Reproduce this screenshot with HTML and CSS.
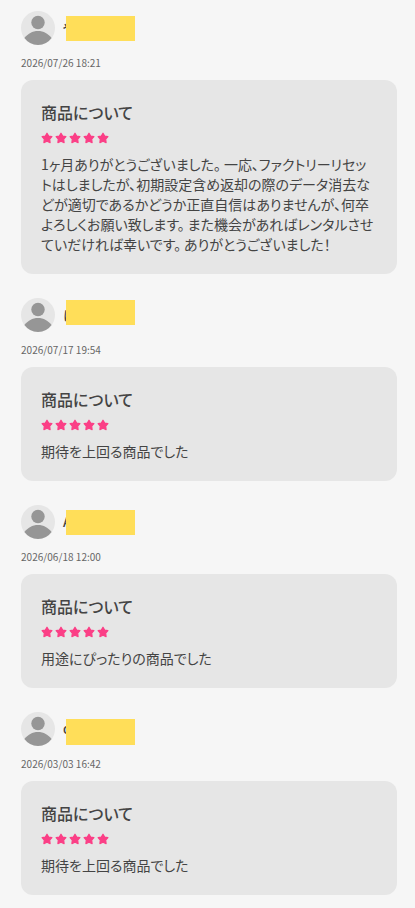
FILE: index.html
```html
<!DOCTYPE html>
<html lang="ja">
<head>
<meta charset="utf-8">
<meta name="viewport" content="width=device-width, initial-scale=1">
<title>レビュー</title>
<link rel="stylesheet" href="styles.css">
</head>
<body>
<svg class="defs" width="0" height="0" aria-hidden="true">
  <symbol id="avatar" viewBox="0 0 34 34">
    <circle cx="17" cy="17" r="17" fill="#e6e6e6"/>
    <circle cx="17" cy="11.5" r="6.7" fill="#969696"/>
    <path d="M3.4 27.1C6.6 22.7 11.5 20 17 20s10.4 2.7 13.6 7.1A17 17 0 0 1 17 34 17 17 0 0 1 3.4 27.1Z" fill="#969696"/>
  </symbol>
  <symbol id="stars" viewBox="0 0 68 12">
    <g fill="#fb3f86" stroke="#fb3f86" stroke-width="1.2" stroke-linejoin="round">
      <path id="star" d="M6 1.2l1.7 2.9 3.2.6-2.2 2.5.4 3.4L6 9.3l-3.1 1.3.4-3.4L1.1 4.7l3.2-.6z"/>
      <use href="#star" x="14"/>
      <use href="#star" x="28"/>
      <use href="#star" x="42"/>
      <use href="#star" x="56"/>
    </g>
  </symbol>
</svg>
<main class="reviews">
  <article class="review">
    <header class="user"><svg class="avatar"><use href="#avatar"/></svg><span class="name">や<i class="mask mask-a"></i></span></header>
    <time class="date">2026/07/26 18:21</time>
    <section class="card">
      <h2 class="title">商品について</h2>
      <svg class="stars"><use href="#stars"/></svg>
      <p class="text">1ヶ月ありがとうございました<span class="stop">。</span>一応、ファクトリーリセッ<br>トはしましたが、初期設定含め返却の際のデータ消去な<br>どが適切であるかどうか正直自信はありませんが、何卒<br>よろしくお願い致します<span class="stop">。</span>また機会があればレンタルさせ<br>ていだければ幸いです<span class="stop">。</span>ありがとうございました！</p>
    </section>
  </article>
  <article class="review">
    <header class="user"><svg class="avatar"><use href="#avatar"/></svg><span class="name">ほ<i class="mask mask-b"></i></span></header>
    <time class="date">2026/07/17 19:54</time>
    <section class="card">
      <h2 class="title">商品について</h2>
      <svg class="stars"><use href="#stars"/></svg>
      <p class="text">期待を上回る商品でした</p>
    </section>
  </article>
  <article class="review">
    <header class="user"><svg class="avatar"><use href="#avatar"/></svg><span class="name">A<i class="mask mask-a"></i></span></header>
    <time class="date">2026/06/18 12:00</time>
    <section class="card">
      <h2 class="title">商品について</h2>
      <svg class="stars"><use href="#stars"/></svg>
      <p class="text">用途にぴったりの商品でした</p>
    </section>
  </article>
  <article class="review">
    <header class="user"><svg class="avatar"><use href="#avatar"/></svg><span class="name">o<i class="mask mask-c"></i></span></header>
    <time class="date">2026/03/03 16:42</time>
    <section class="card">
      <h2 class="title">商品について</h2>
      <svg class="stars"><use href="#stars"/></svg>
      <p class="text">期待を上回る商品でした</p>
    </section>
  </article>
</main>
</body>
</html>
```
FILE: styles.css
```css
* { box-sizing: border-box; }
body {
  margin: 0;
  background: #f6f6f6;
  color: #444;
  font-family: "Noto Sans CJK JP", sans-serif;
  font-feature-settings: "palt";
}
.defs { display: none; }
.reviews {
  display: flex;
  flex-direction: column;
  gap: 24px;
  padding: 11px 18px 13px 21px;
}
.review { display: flex; flex-direction: column; }
.user {
  display: flex;
  align-items: center;
  gap: 8px;
  height: 34px;
}
.avatar { display: block; width: 34px; height: 34px; }
.name {
  position: relative;
  height: 34px;
  line-height: 34px;
  font-size: 13px;
  font-weight: 500;
}
.mask {
  position: absolute;
  left: 3px;
  width: 69px;
  height: 25px;
  background: #ffde59;
}
.mask-a { top: 5px; }
.mask-b { top: 2px; }
.mask-c { top: 7px; height: 26px; }
.date {
  margin: 10px 0 9px;
  font-size: 10px;
  line-height: 16px;
  letter-spacing: 0.03px;
  color: #666;
}
.card {
  padding: 20px;
  border-radius: 12px;
  background: #e6e6e6;
}
.title {
  margin: 0;
  font-size: 16px;
  font-weight: 500;
  line-height: 24px;
}
.stars { display: block; width: 68px; height: 12px; margin: 8px 0 10px; }
.text {
  margin: 0;
  font-size: 14px;
  line-height: 20px;
  white-space: nowrap;
}
.stop { margin-right: 3px; }
```
